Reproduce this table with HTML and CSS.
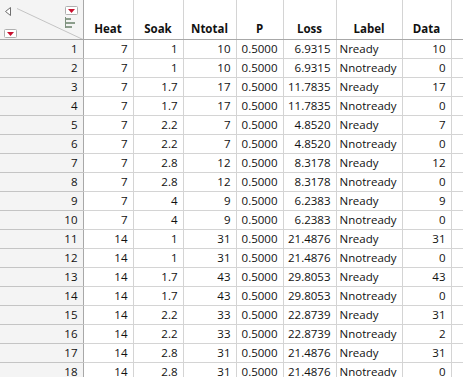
FILE: index.html
```html
<!DOCTYPE html>
<html>
<head>
<meta charset="utf-8">
<link rel="stylesheet" href="styles.css">
</head>
<body>
<table class="grid">
<colgroup>
<col class="c-row"><col class="c-heat"><col class="c-soak"><col class="c-ntotal"><col class="c-p"><col class="c-loss"><col class="c-label"><col class="c-data"><col class="c-rest">
</colgroup>
<thead>
<tr>
<th class="corner">
<div class="corner-box">
<svg class="corner-svg" width="83" height="36" viewBox="0 0 83 36">
<line x1="17" y1="5.5" x2="83" y2="36.5" stroke="#c4c4c4" stroke-width="1"/>
<path d="M10.5 4.5 L5.5 8.5 L10.5 12.5 Z" fill="#fff" stroke="#6f6f6f" stroke-width="1"/>
<rect x="65.5" y="3.5" width="12" height="8" rx="1" fill="#fff" stroke="#b0b0b0"/>
<path d="M68 6 L75 6 L71.5 10 Z" fill="#c8102e"/>
<rect x="4.5" y="26.5" width="12" height="8" rx="1" fill="#fff" stroke="#b0b0b0"/>
<path d="M7 29 L14 29 L10.5 33 Z" fill="#c8102e"/>
<rect x="65" y="14" width="1" height="11" fill="#7f917f"/>
<rect x="66" y="15" width="5" height="2" fill="#8c9e8c"/>
<rect x="66" y="19" width="9" height="2" fill="#8c9e8c"/>
<rect x="66" y="23" width="6" height="2" fill="#8c9e8c"/>
</svg>
</div>
</th>
<th>Heat</th><th>Soak</th><th>Ntotal</th><th>P</th><th>Loss</th><th>Label</th><th>Data</th><th class="rest"></th>
</tr>
</thead>
<tbody>
<tr><td class="rn">1</td><td>7</td><td>1</td><td>10</td><td>0.5000</td><td>6.9315</td><td class="lbl">Nready</td><td>10</td><td class="rest"></td></tr>
<tr><td class="rn">2</td><td>7</td><td>1</td><td>10</td><td>0.5000</td><td>6.9315</td><td class="lbl">Nnotready</td><td>0</td><td class="rest"></td></tr>
<tr><td class="rn">3</td><td>7</td><td>1.7</td><td>17</td><td>0.5000</td><td>11.7835</td><td class="lbl">Nready</td><td>17</td><td class="rest"></td></tr>
<tr><td class="rn">4</td><td>7</td><td>1.7</td><td>17</td><td>0.5000</td><td>11.7835</td><td class="lbl">Nnotready</td><td>0</td><td class="rest"></td></tr>
<tr><td class="rn">5</td><td>7</td><td>2.2</td><td>7</td><td>0.5000</td><td>4.8520</td><td class="lbl">Nready</td><td>7</td><td class="rest"></td></tr>
<tr><td class="rn">6</td><td>7</td><td>2.2</td><td>7</td><td>0.5000</td><td>4.8520</td><td class="lbl">Nnotready</td><td>0</td><td class="rest"></td></tr>
<tr><td class="rn">7</td><td>7</td><td>2.8</td><td>12</td><td>0.5000</td><td>8.3178</td><td class="lbl">Nready</td><td>12</td><td class="rest"></td></tr>
<tr><td class="rn">8</td><td>7</td><td>2.8</td><td>12</td><td>0.5000</td><td>8.3178</td><td class="lbl">Nnotready</td><td>0</td><td class="rest"></td></tr>
<tr><td class="rn">9</td><td>7</td><td>4</td><td>9</td><td>0.5000</td><td>6.2383</td><td class="lbl">Nready</td><td>9</td><td class="rest"></td></tr>
<tr><td class="rn">10</td><td>7</td><td>4</td><td>9</td><td>0.5000</td><td>6.2383</td><td class="lbl">Nnotready</td><td>0</td><td class="rest"></td></tr>
<tr><td class="rn">11</td><td>14</td><td>1</td><td>31</td><td>0.5000</td><td>21.4876</td><td class="lbl">Nready</td><td>31</td><td class="rest"></td></tr>
<tr><td class="rn">12</td><td>14</td><td>1</td><td>31</td><td>0.5000</td><td>21.4876</td><td class="lbl">Nnotready</td><td>0</td><td class="rest"></td></tr>
<tr><td class="rn">13</td><td>14</td><td>1.7</td><td>43</td><td>0.5000</td><td>29.8053</td><td class="lbl">Nready</td><td>43</td><td class="rest"></td></tr>
<tr><td class="rn">14</td><td>14</td><td>1.7</td><td>43</td><td>0.5000</td><td>29.8053</td><td class="lbl">Nnotready</td><td>0</td><td class="rest"></td></tr>
<tr><td class="rn">15</td><td>14</td><td>2.2</td><td>33</td><td>0.5000</td><td>22.8739</td><td class="lbl">Nready</td><td>31</td><td class="rest"></td></tr>
<tr><td class="rn">16</td><td>14</td><td>2.2</td><td>33</td><td>0.5000</td><td>22.8739</td><td class="lbl">Nnotready</td><td>2</td><td class="rest"></td></tr>
<tr><td class="rn">17</td><td>14</td><td>2.8</td><td>31</td><td>0.5000</td><td>21.4876</td><td class="lbl">Nready</td><td>31</td><td class="rest"></td></tr>
<tr><td class="rn">18</td><td>14</td><td>2.8</td><td>31</td><td>0.5000</td><td>21.4876</td><td class="lbl">Nnotready</td><td>0</td><td class="rest"></td></tr>
</tbody>
</table>
</body>
</html>
```
FILE: styles.css
```css
html, body {
  margin: 0;
  padding: 0;
  background: #fff;
  overflow: hidden;
}
.grid {
  border-collapse: collapse;
  table-layout: fixed;
  width: 463px;
  font-family: "Open Sans", "Noto Sans", sans-serif;
  font-size: 11.5px;
  color: #111;
}
.c-row { width: 83px; }
.c-heat { width: 50px; }
.c-soak { width: 50px; }
.c-ntotal { width: 53px; }
.c-p { width: 47px; }
.c-loss { width: 53px; }
.c-label { width: 66px; }
.c-data { width: 49px; }
.c-rest { width: 12px; }

th {
  height: 36px;
  padding: 0 0 3px 0;
  vertical-align: bottom;
  text-align: center;
  font-weight: bold;
  border-right: 1px solid #d4d4d4;
  border-bottom: 1px solid #a8a8a8;
  background: #fff;
  white-space: nowrap;
}
th.corner {
  padding: 0;
  background: #f4f4f4;
  border-right: 1px solid #a8a8a8;
}
.corner-box {
  position: relative;
  height: 36px;
}
.corner-svg {
  position: absolute;
  left: 0;
  top: 0;
  display: block;
}
td {
  height: 18px;
  padding: 0 5px 0 2px;
  text-align: right;
  vertical-align: middle;
  border-right: 1px solid #d4d4d4;
  border-bottom: 1px solid #d4d4d4;
  white-space: nowrap;
  line-height: 18px;
}
td.rn {
  background: #f4f4f4;
  border-right: 1px solid #a8a8a8;
  border-bottom: 1px solid #c4c4c4;
  padding-right: 5px;
}
td.lbl {
  text-align: left;
  padding-left: 3px;
}
td.rest, th.rest {
  border-right: none;
}
```
